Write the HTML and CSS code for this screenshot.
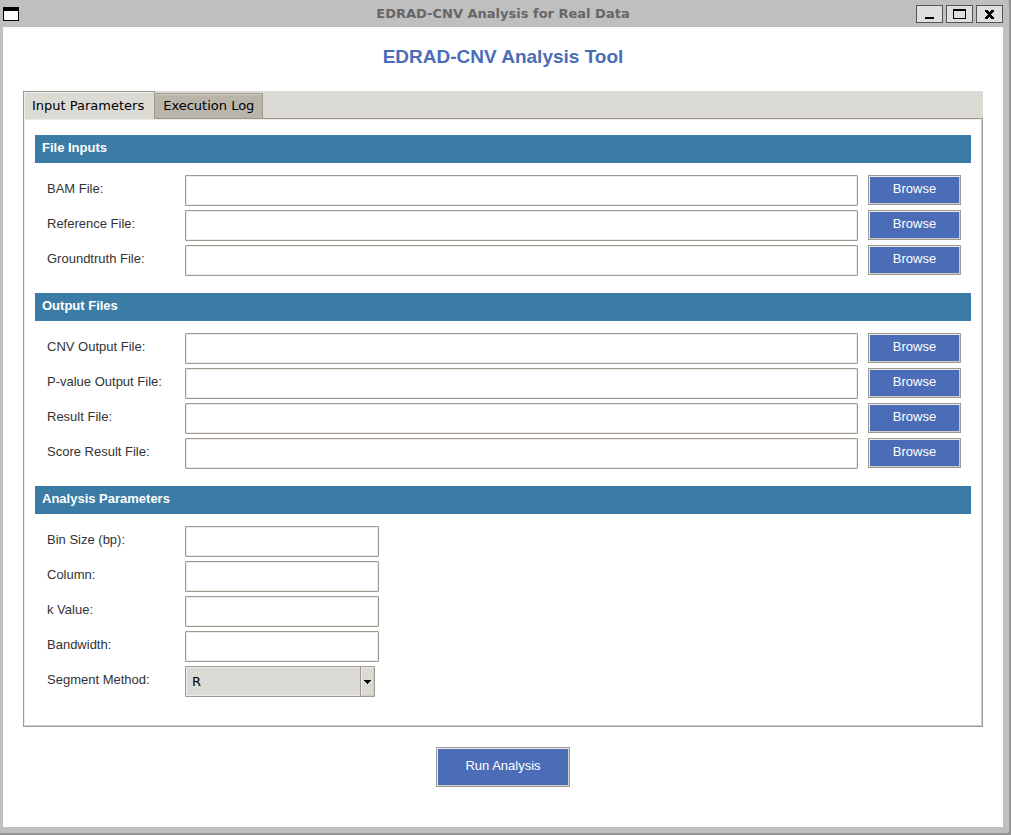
FILE: index.html
```html
<!DOCTYPE html>
<html lang="en">
<head>
<meta charset="utf-8">
<title>EDRAD-CNV Analysis for Real Data</title>
<link rel="stylesheet" href="styles.css">
</head>
<body>
<div class="window">
  <header class="titlebar">
    <svg class="app-icon" width="16" height="14" viewBox="0 0 16 14" shape-rendering="crispEdges" aria-hidden="true"><path d="M0 0h16v14H0z"/><path fill="#fff" d="M1 4h14v9H1z"/></svg>
    <div class="window-title">EDRAD-CNV Analysis for Real Data</div>
    <div class="window-controls">
      <button class="window-button" type="button" aria-label="Minimize"><svg width="25" height="16" viewBox="0 0 25 16" shape-rendering="crispEdges"><path d="M8 11h9v2H8z"/></svg></button>
      <button class="window-button" type="button" aria-label="Maximize"><svg width="25" height="16" viewBox="0 0 25 16" shape-rendering="crispEdges"><path fill-rule="evenodd" d="M6 3h13v10H6zM7 5v7h11V5z"/></svg></button>
      <button class="window-button" type="button" aria-label="Close"><svg width="25" height="16" viewBox="0 0 25 16" shape-rendering="crispEdges"><path d="M8 4h3v1h1v1h1V5h1V4h3v2h-1v1h-1v1h-1v1h1v1h1v1h1v2h-3v-1h-1v-1h-1v1h-1v1H8v-2h1v-1h1V9h1V8h-1V7H9V6H8z"/></svg></button>
    </div>
  </header>
  <main class="content">
    <h1 class="heading">EDRAD-CNV Analysis Tool</h1>
    <div class="notebook">
      <div class="tabs" role="tablist">
        <button class="tab tab-active" type="button" role="tab" aria-selected="true">Input Parameters</button>
        <button class="tab" type="button" role="tab" aria-selected="false">Execution Log</button>
      </div>
      <form class="panel" id="analysis" role="tabpanel">
        <section class="group">
          <h2 class="group-title">File Inputs</h2>
          <div class="rows">
            <div class="row"><label class="label" for="bam">BAM File:</label><input class="field" id="bam" type="text"><button class="browse" type="button">Browse</button></div>
            <div class="row"><label class="label" for="reference">Reference File:</label><input class="field" id="reference" type="text"><button class="browse" type="button">Browse</button></div>
            <div class="row"><label class="label" for="groundtruth">Groundtruth File:</label><input class="field" id="groundtruth" type="text"><button class="browse" type="button">Browse</button></div>
          </div>
        </section>
        <section class="group">
          <h2 class="group-title">Output Files</h2>
          <div class="rows">
            <div class="row"><label class="label" for="cnv">CNV Output File:</label><input class="field" id="cnv" type="text"><button class="browse" type="button">Browse</button></div>
            <div class="row"><label class="label" for="pvalue">P-value Output File:</label><input class="field" id="pvalue" type="text"><button class="browse" type="button">Browse</button></div>
            <div class="row"><label class="label" for="result">Result File:</label><input class="field" id="result" type="text"><button class="browse" type="button">Browse</button></div>
            <div class="row"><label class="label" for="score">Score Result File:</label><input class="field" id="score" type="text"><button class="browse" type="button">Browse</button></div>
          </div>
        </section>
        <section class="group">
          <h2 class="group-title">Analysis Parameters</h2>
          <div class="rows">
            <div class="row"><label class="label" for="bin">Bin Size (bp):</label><input class="field field-short" id="bin" type="text"></div>
            <div class="row"><label class="label" for="column">Column:</label><input class="field field-short" id="column" type="text"></div>
            <div class="row"><label class="label" for="kvalue">k Value:</label><input class="field field-short" id="kvalue" type="text"></div>
            <div class="row"><label class="label" for="bandwidth">Bandwidth:</label><input class="field field-short" id="bandwidth" type="text"></div>
            <div class="row"><label class="label" for="segment">Segment Method:</label><div class="combo"><select class="combo-select" id="segment"><option>R</option></select><span class="combo-arrow"><svg width="7" height="4" viewBox="0 0 7 4" shape-rendering="crispEdges" aria-hidden="true"><path d="M0 0h7v1H6v1H5v1H4v1H3V3H2V2H1V1H0z"/></svg></span></div></div>
          </div>
        </section>
      </form>
    </div>
    <button class="run" type="submit" form="analysis">Run Analysis</button>
  </main>
</div>
</body>
</html>
```

FILE: styles.css
```css
* {
  box-sizing: border-box;
}

body {
  margin: 0;
  background: #949494;
  color: #333;
  font: 13px/16px "Liberation Sans", Arial, sans-serif;
}

button,
input,
select {
  margin: 0;
  padding: 0;
  border-radius: 0;
  font: inherit;
}

.window {
  display: flex;
  flex-direction: column;
  min-height: calc(100vh - 2px);
  margin: 0 2px 2px 0;
  padding: 0 6px 6px 3px;
  background: #bfbfbf;
  border-radius: 0 2px 2px 0;
}

.titlebar {
  display: grid;
  grid-template-columns: 87px 1fr 87px;
  align-items: center;
  height: 27px;
}

.window-title {
  color: #666;
  font: bold 13px/16px "DejaVu Sans", sans-serif;
  text-align: center;
}

.window-controls {
  display: flex;
  gap: 3px;
}

.window-button {
  display: flex;
  width: 27px;
  height: 18px;
  border: 1px solid #555;
  background: #dfdfdf;
}

.content {
  display: flex;
  flex: 1;
  flex-direction: column;
  align-items: center;
  padding: 18px 20px;
  background: #fff;
}

.heading {
  margin: 0 0 22px;
  color: #4b6cb7;
  font-size: 19px;
  line-height: 24px;
}

.notebook {
  width: 100%;
}

.tabs {
  display: flex;
  align-items: flex-end;
  height: 27px;
  background: #dcdad5;
}

.tab {
  height: 25px;
  padding: 0 8px;
  border: 1px solid #9e9a91;
  border-width: 1px 1px 0 0;
  background: #bab5ab;
  box-shadow: inset 0 1px #cfcbc4;
  color: #000;
  font: 13px/16px "DejaVu Sans", sans-serif;
}

.tab-active {
  z-index: 1;
  height: 28px;
  margin-bottom: -1px;
  padding-right: 10px;
  border-width: 1px 1px 0 1px;
  background: #dcdad5;
  box-shadow: inset 1px 1px #eeebe7;
}

.panel {
  display: flex;
  flex-direction: column;
  gap: 17px;
  padding: 16px 11px 29px;
  border: 1px solid #9e9a91;
  box-shadow: inset 1px 1px #eeebe7, inset -1px -1px #cfcdc8;
}

.group-title {
  margin: 0;
  padding: 5px 7px 7px;
  background: #3a7ca5;
  color: #fff;
  font-size: 13px;
  line-height: 16px;
}

.rows {
  display: grid;
  gap: 4px;
  padding: 12px 10px 0 12px;
}

.row {
  display: flex;
  height: 31px;
}

.label {
  width: 138px;
  padding-top: 6px;
}

.field {
  flex: 1;
  min-width: 0;
  padding: 0 6px;
  border: 1px solid #9e9a91;
  border-radius: 1px;
  outline: none;
  background: #fff;
  box-shadow: inset 0 0 0 1px #eeebe7;
}

.field-short {
  flex: 0 0 194px;
}

.browse,
.run {
  border: 1px solid #9e9a91;
  background: #4b6cb7;
  box-shadow: inset 1px 1px #eeebe7, inset -1px -1px #cfcdc8;
  color: #fff;
}

.browse {
  width: 93px;
  height: 30px;
  margin-left: 10px;
  padding-bottom: 3px;
}

.combo {
  display: grid;
  grid-template-columns: 1fr 14px;
  width: 190px;
  border: 1px solid #9e9a91;
  border-radius: 1px;
  background: #dcdad5;
  box-shadow: inset 0 0 0 1px #eeebe7;
}

.combo-select {
  grid-area: 1 / 1 / 2 / 3;
  padding: 0 6px;
  border: 0;
  outline: none;
  appearance: none;
  background: transparent;
  color: #000;
  font: 13px/16px "DejaVu Sans", sans-serif;
}

.combo-arrow {
  display: grid;
  grid-area: 1 / 2;
  place-items: center;
  border-left: 1px solid #9e9a91;
  box-shadow: inset 1px 1px #eeebe7, inset -1px -1px #cfcdc8;
  pointer-events: none;
}

.run {
  width: 134px;
  height: 40px;
  margin-top: 20px;
  padding-bottom: 3px;
}
```
